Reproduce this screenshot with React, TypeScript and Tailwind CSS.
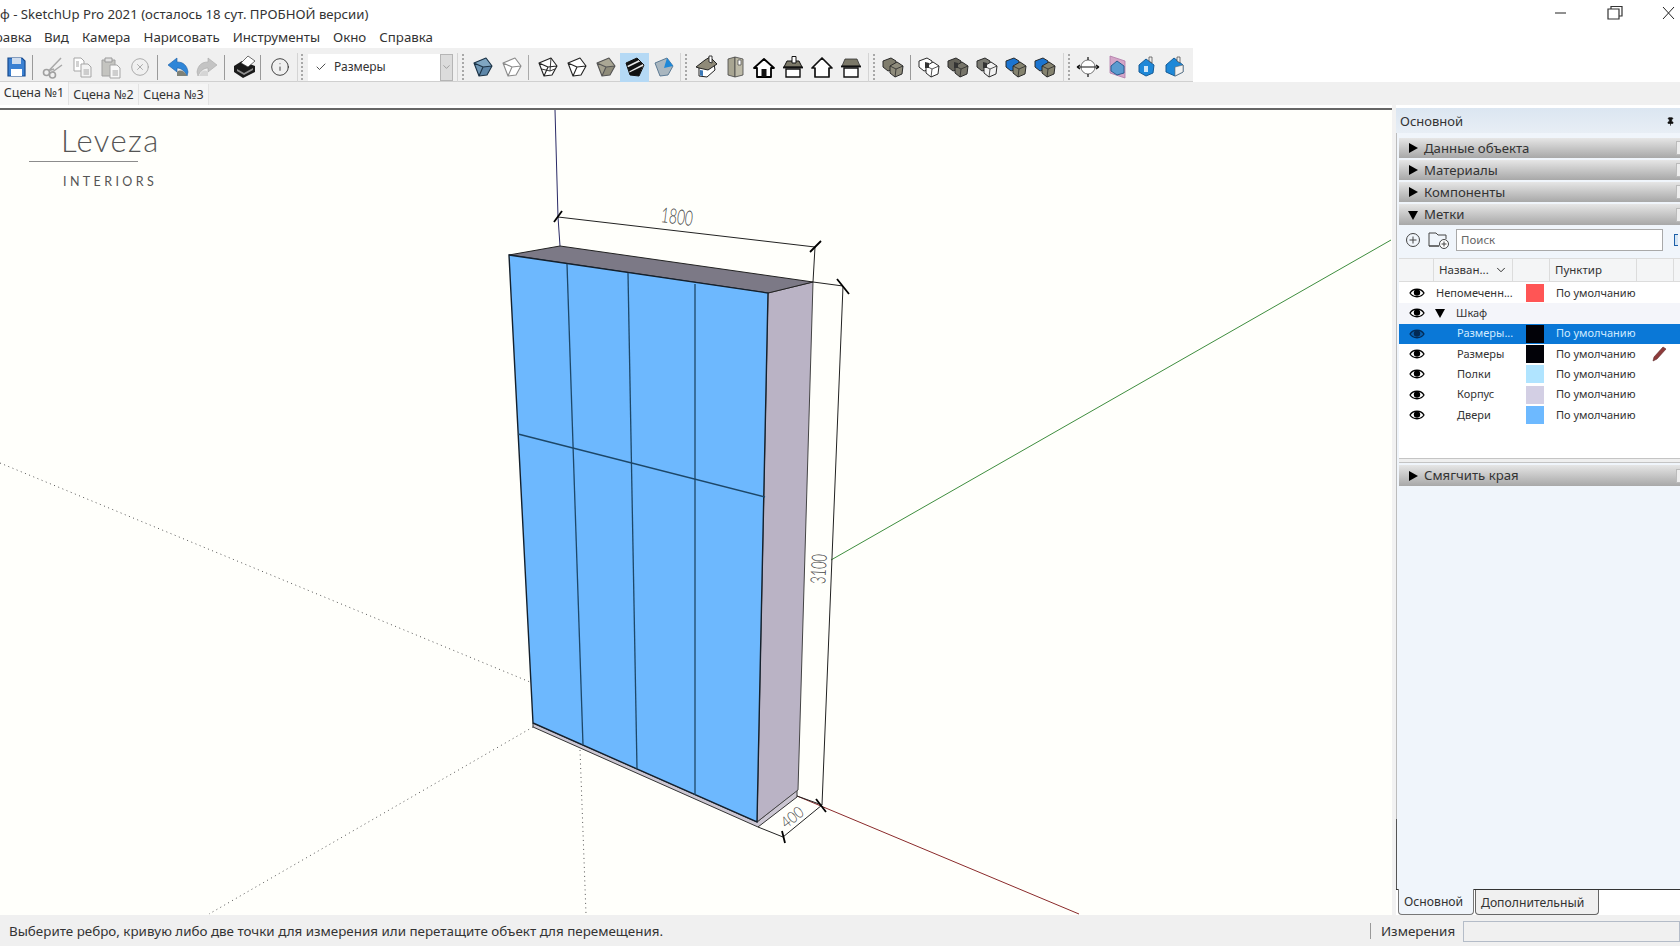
import { Check, ChevronDown, CircleX, Info, Pin } from "lucide-react";
import type { ReactNode } from "react";

const MENU = ["Вид", "Камера", "Нарисовать", "Инструменты", "Окно", "Справка"];

const LAYERS = [
  { name: "Непомеченн...", color: "#ff5555", dash: "По умолчанию", indent: false, arrow: false },
  { name: "Шкаф", color: "", dash: "", indent: true, arrow: true },
  { name: "Размеры...", color: "#020208", dash: "По умолчанию", indent: true, selected: true },
  { name: "Размеры", color: "#020208", dash: "По умолчанию", indent: true, pencil: true },
  { name: "Полки", color: "#b0e4ff", dash: "По умолчанию", indent: true },
  { name: "Корпус", color: "#d3cfe4", dash: "По умолчанию", indent: true },
  { name: "Двери", color: "#6db9ff", dash: "По умолчанию", indent: true },
];

function Ico({ children }: { children: ReactNode }) {
  return (
    <svg viewBox="0 0 24 24" className="h-[24px] w-[24px]">
      {children}
    </svg>
  );
}

function Btn({ children, active, className }: { children: ReactNode; active?: boolean; className?: string }) {
  return (
    <div
      className={`flex h-[29px] w-[29px] shrink-0 items-center justify-center ${
        active ? "bg-[#b5d9f5]" : ""
      } ${className ?? ""}`}
    >
      {children}
    </div>
  );
}

function Sep({ className }: { className: string }) {
  return <div className={`h-[25px] w-px shrink-0 bg-[#9a9a9a] ${className}`} />;
}

function Break({ className }: { className: string }) {
  return <div className={`h-[29px] w-px shrink-0 bg-[#d4d4d4] ${className}`} />;
}

function Grip({ className }: { className: string }) {
  return <div className={`h-[26px] w-[2px] shrink-0 border-l-2 border-dotted border-[#a8a8a8] ${className}`} />;
}

// tilted box used by the face style buttons
function Cube({ top, left, right, stroke = "#222", hidden }: { top: string; left: string; right: string; stroke?: string; hidden?: boolean }) {
  return (
    <Ico>
      <path d="M3 8 L15 3 L21 11 L16 20 L8 21 Z" fill={right} />
      <path d="M3 8 L12 12 L8 21 Z" fill={left} />
      <path d="M3 8 L15 3 L21 11 L12 12 Z" fill={top} />
      <path
        d="M3 8 L15 3 L21 11 L16 20 L8 21 Z M3 8 L12 12 L21 11 M12 12 L8 21"
        fill="none"
        stroke={stroke}
        strokeWidth="1.1"
        strokeLinejoin="round"
      />
      {hidden && <path d="M5.5 14 L14 16 L19 14 M15 3 L14 16" fill="none" stroke={stroke} strokeWidth="0.9" />}
    </Ico>
  );
}

function Striped() {
  return (
    <Ico>
      <path d="M3 8 L14 3 L21 10 L16 21 L7 20 Z" fill="#e8e8e8" stroke="#111" strokeWidth="1" />
      <path d="M3 8 L14 3 L16 5 L4 11 Z M4.5 12.5 L17 6.5 L20 9 L6 16.5 Z M6.5 17.5 L20 11 L16 21 L7 20 Z" fill="#111" />
    </Ico>
  );
}

function Mono() {
  return (
    <Ico>
      <path d="M3 8 L15 3 L21 11 L16 20 L8 21 Z" fill="#a9b6bf" stroke="#50708c" strokeWidth="0.9" />
      <path d="M15 3 L21 11 L12 13 Z" fill="#1e88d8" />
    </Ico>
  );
}

function House({ body = "#fff", roof = "#8f8a78", stroke = "#222", chimney = true }: { body?: string; roof?: string; stroke?: string; chimney?: boolean }) {
  return (
    <Ico>
      <path d="M5 12 L5 21 L13 22 L21 15 L20 9 Z" fill={body} stroke={stroke} strokeWidth="1" />
      <path d="M2 12 L11 5 L16 2 L23 9 L14 15 L5 13 Z" fill={roof} stroke={stroke} strokeWidth="1" />
      {chimney && <path d="M15 1 L18 1 L18 8 L15 7 Z" fill="#fff" stroke={stroke} strokeWidth="0.9" />}
      <path d="M6 15 L9 15.5 L9 21 L6 20.5 Z" fill="#3b79b8" />
    </Ico>
  );
}

function Boxes({ a, b, outline }: { a: string; b: string; outline?: boolean }) {
  return (
    <Ico>
      <path d="M2 6 L10 3 L15 6 L15 14 L7 16 L2 12 Z" fill={a} stroke="#2a2a2a" strokeWidth="1" />
      <path d="M9 11 L16 7 L22 11 L21 19 L14 22 L9 18 Z" fill={b} stroke="#2a2a2a" strokeWidth="1" />
      <path d="M9 11 L15 14 L22 11 M15 14 L14 22" fill="none" stroke="#2a2a2a" strokeWidth="0.8" />
      {outline && <path d="M8 7 L12 8 L12 13 L8 13 Z" fill="#333" />}
    </Ico>
  );
}

function Tri({ open }: { open?: boolean }) {
  return (
    <svg viewBox="0 0 10 10" className="h-[10px] w-[10px]">
      <path d={open ? "M0 1 H10 L5 10 Z" : "M1 0 L10 5 L1 10 Z"} fill="#000" />
    </svg>
  );
}

function Toolbar() {
  return (
    <div className="flex h-[34px] w-[1193px] items-center border-b border-[#d0d0d0] bg-[#f0f0f0] pl-px pt-[5px]">
      <Btn>
        <Ico>
          <path d="M4 3 H18 L21 6 V21 H4 Z" fill="#3a80d2" stroke="#17498c" strokeWidth="1.2" />
          <path d="M8 3 H17 V9 H8 Z" fill="#cfdced" />
          <path d="M7 14 H18 V21 H7 Z" fill="#fff" />
        </Ico>
      </Btn>
      <Sep className="ml-[2px]" />
      <Btn className="ml-[5px]">
        <Ico>
          <circle cx="5.5" cy="17.5" r="3" fill="none" stroke="#a0a0a0" strokeWidth="1.6" />
          <circle cx="11.5" cy="20" r="3" fill="none" stroke="#a0a0a0" strokeWidth="1.6" />
          <path d="M8 15.5 L20 3 M10 18 L21 10 M8 15.5 L13 14" stroke="#a8a8a8" strokeWidth="1.5" fill="none" />
        </Ico>
      </Btn>
      <Btn>
        <Ico>
          <path d="M4 3 H11 L14 6 V16 H4 Z" fill="#fff" stroke="#a5a5a5" />
          <path d="M11 9 H18 L21 12 V22 H11 Z" fill="#f4f4f4" stroke="#a5a5a5" />
          <path d="M13.5 15 H19 M13.5 17 H19 M13.5 19 H19 M6 7 H9 M6 9 H9 M6 11 H9" stroke="#a5a5a5" />
        </Ico>
      </Btn>
      <Btn>
        <Ico>
          <path d="M3 5 H16 V21 H3 Z" fill="#c4c4c0" stroke="#a0a0a0" />
          <path d="M6 3 H13 V7 H6 Z" fill="#e2e2e2" stroke="#999" />
          <path d="M11 10 H18 L21 13 V23 H11 Z" fill="#f8f8f8" stroke="#a5a5a5" />
          <path d="M13.5 16 H19 M13.5 18 H19 M13.5 20 H19" stroke="#a5a5a5" />
        </Ico>
      </Btn>
      <Btn>
        <CircleX size={20} strokeWidth={1} color="#9e9e9e" />
      </Btn>
      <Sep className="ml-[3px]" />
      <Btn className="ml-[5px]">
        <Ico>
          <path d="M2 10 L11 3 L11 7 C17 7 21 10 22 17 L21 21 C19 16 15 13 11 13 L11 17 Z" fill="#2f86d8" stroke="#1b5da3" strokeWidth="0.6" />
          <path d="M11 17 C14 14 19 16 21 21 L11 21 Z" fill="#7f8278" />
        </Ico>
      </Btn>
      <Btn>
        <Ico>
          <path d="M22 10 L13 3 L13 7 C7 7 3 10 2 17 L3 21 C5 16 9 13 13 13 L13 17 Z" fill="#c4c4c4" stroke="#a8a8a8" strokeWidth="0.6" />
          <path d="M13 17 C10 14 6 16 4 21 L13 21 Z" fill="#d5d5d5" />
        </Ico>
      </Btn>
      <Sep className="ml-[3px]" />
      <Btn className="ml-[5px]">
        <Ico>
          <path d="M1 11 L9 6 L22 11 L22 17 L10 23 L1 17 Z" fill="#1a1a1a" />
          <path d="M8 8 L15 1 L22 6 L15 12 Z" fill="#fff" stroke="#333" strokeWidth="0.7" />
          <path d="M4 14 L11 18 L20 13 L20 15 L11 20 L4 16 Z" fill="#8f8f8f" />
        </Ico>
      </Btn>
      <Sep className="ml-px" />
      <Btn className="ml-[4px]">
        <Info size={20} strokeWidth={1} color="#222" />
      </Btn>
      <Break className="ml-[3px]" />
      <Grip className="ml-[3px]" />
      <div className="ml-[5px] flex h-[27px] w-[145px] shrink-0 items-center bg-white pl-[7px] text-[12px] text-[#333]">
        <Check size={12} strokeWidth={1.6} color="#222" />
        <span className="ml-[7px] flex-1">Размеры</span>
        <div className="flex h-full w-[13px] items-center justify-center border border-[#b5b5b5] bg-[#dcdcdc]">
          <ChevronDown size={12} strokeWidth={1} color="#555" />
        </div>
      </div>
      <Break className="ml-[4px]" />
      <Grip className="ml-[4px]" />
      <Btn className="ml-[4px]">
        <Cube top="#7fa6c2" left="#6d95b4" right="#5d86a8" stroke="#1c3346" />
      </Btn>
      <Btn>
        <Cube top="#fff" left="#fff" right="#fff" stroke="#8a8a8a" />
      </Btn>
      <Sep className="ml-[2px] w-[2px] bg-[#aaaaaa]" />
      <Btn className="ml-[4px]">
        <Cube top="#fff" left="#fff" right="#fff" stroke="#222" hidden />
      </Btn>
      <Btn>
        <Cube top="#fff" left="#fff" right="#fff" stroke="#222" />
      </Btn>
      <Btn>
        <Cube top="#aaa795" left="#a3a08e" right="#8f8c7a" stroke="#555" />
      </Btn>
      <Btn active>
        <Striped />
      </Btn>
      <Btn>
        <Mono />
      </Btn>
      <Break className="ml-[2px]" />
      <Grip className="ml-[4px]" />
      <Btn className="ml-[4px]">
        <House />
      </Btn>
      <Btn>
        <Ico>
          <path d="M5 4 L12 2 L12 22 L5 20 Z" fill="#a8a592" stroke="#444" strokeWidth="0.8" />
          <path d="M12 2 L20 4 L20 20 L12 22 Z" fill="#bdbaa8" stroke="#444" strokeWidth="0.8" />
          <path d="M15 5 H18 V10 H15 Z" fill="#fff" stroke="#444" strokeWidth="0.7" />
        </Ico>
      </Btn>
      <Btn>
        <Ico>
          <path d="M2 13 L12 4 L22 13 L19 13 L19 22 L5 22 L5 13 Z" fill="#fff" stroke="#000" strokeWidth="1.8" strokeLinejoin="round" />
          <path d="M9.5 14 H14.5 V22 H9.5 Z" fill="#111" />
        </Ico>
      </Btn>
      <Btn>
        <Ico>
          <path d="M3 12 H21 L18 6 H6 Z" fill="#7b7868" stroke="#111" />
          <path d="M5 14 H19 V22 H5 Z" fill="#fff" stroke="#111" strokeWidth="1.4" />
          <path d="M2 12.5 H22" stroke="#111" strokeWidth="1.8" />
          <path d="M11 1.5 H15 V8 H11 Z" fill="#fff" stroke="#111" />
        </Ico>
      </Btn>
      <Btn>
        <Ico>
          <path d="M2 13 L12 3 L22 13 L19 13 L19 22 L5 22 L5 13 Z" fill="#fff" stroke="#111" strokeWidth="1.7" strokeLinejoin="round" />
        </Ico>
      </Btn>
      <Btn>
        <Ico>
          <path d="M3 11 L6 4 H18 L21 11 Z" fill="#7b7868" stroke="#333" strokeWidth="0.8" />
          <path d="M2 11.5 H22" stroke="#111" strokeWidth="1.8" />
          <path d="M5 13 H19 V22 H5 Z" fill="#fff" stroke="#111" strokeWidth="1.4" />
        </Ico>
      </Btn>
      <Break className="ml-[3px]" />
      <Grip className="ml-[4px]" />
      <Btn className="ml-[3px]">
        <Boxes a="#7f7c6c" b="#8f8c7c" />
      </Btn>
      <Sep className="ml-[3px]" />
      <Btn className="ml-[3px]">
        <Boxes a="#ffffff" b="#ffffff" outline />
      </Btn>
      <Btn>
        <Boxes a="#65635a" b="#77756a" outline />
      </Btn>
      <Btn>
        <Boxes a="#7a7a72" b="#f2f2f2" outline />
      </Btn>
      <Btn>
        <Boxes a="#1b74d0" b="#85836f" />
      </Btn>
      <Btn>
        <Boxes a="#1b74d0" b="#85836f" />
      </Btn>
      <Break className="ml-[4px]" />
      <Grip className="ml-[4px]" />
      <Btn className="ml-[3px]">
        <Ico>
          <circle cx="12" cy="12" r="7" fill="#fff" stroke="#555" strokeWidth="0.8" />
          <path d="M1 12 H23 M12 2 V5 M12 19 V22 M1 12 L4 10 M1 12 L4 14 M23 12 L20 10 M23 12 L20 14" stroke="#111" strokeWidth="1.2" fill="none" />
        </Ico>
      </Btn>
      <Btn>
        <Ico>
          <path d="M5 1 L20 6 L20 23 L5 18 Z" fill="#d4a6c8" stroke="#b07aa8" strokeWidth="0.8" />
          <path d="M12 6 L19 11 L19 18 L12 20 L6 16 L6 11 Z" fill="#5a9bd0" stroke="#2a5d8f" />
        </Ico>
      </Btn>
      <Btn>
        <Ico>
          <path d="M12 4 L20 10 L19 18 L12 21 L5 17 L5 10 Z" fill="#1e88d8" stroke="#155b96" />
          <path d="M10 11 H14 V17 H10 Z" fill="#cfe6f7" />
          <path d="M15 2 H18 V8 L15 6 Z" fill="#eee" stroke="#444" strokeWidth="0.7" />
        </Ico>
      </Btn>
      <Btn>
        <Ico>
          <path d="M3 10 L11 3 L20 10 L20 17 L12 21 L3 17 Z" fill="#1e88d8" stroke="#155b96" />
          <path d="M12 12 L20 10 L20 17 L12 21 Z" fill="#f2f2f2" stroke="#666" strokeWidth="0.6" />
          <path d="M14 2 H17 V8 L14 6 Z" fill="#eee" stroke="#444" strokeWidth="0.7" />
        </Ico>
      </Btn>
    </div>
  );
}

function Scene() {
  return (
    <svg viewBox="0 108 1392 807" className="block h-[807px] w-[1392px]">
      {/* axes */}
      <path d="M555 110 L558 217 L560 246" stroke="#2a2a66" strokeWidth="1" fill="none" />
      <path d="M831 560 L1391 240" stroke="#3e8d3e" strokeWidth="1" />
      <path d="M797 796 L1079 914" stroke="#8a2a2a" strokeWidth="1" />
      <g stroke="#555" strokeWidth="1" strokeDasharray="1 3.5">
        <path d="M0 463 L530 682" />
        <path d="M533 727 L209 914" />
        <path d="M580 750 L586 914" />
      </g>
      {/* cabinet */}
      <path d="M533 723 L533 727 L758 827 L797 797 L797 790 L757 822 Z" fill="#cbc6d2" stroke="#333" strokeWidth="1" />
      <path d="M768 293 L813 282 L798 790 L757 822 Z" fill="#bab3c5" stroke="#444" strokeWidth="1" />
      <path d="M509 255 L560 246 L813 282 L768 293 Z" fill="#7c7986" stroke="#222" strokeWidth="1" />
      <path d="M509 255 L768 293 L757 822 L533 723 Z" fill="#6db8fe" stroke="#14202c" strokeWidth="1.4" />
      <g stroke="#1d4768" strokeWidth="1.3">
        <path d="M567 264 L583 745" />
        <path d="M628 273 L637 769" />
        <path d="M695 284 L695 795" />
        <path d="M518 434 L765 497" />
      </g>
      {/* dimensions */}
      <g stroke="#222" strokeWidth="1" fill="none">
        <path d="M558 217 L815 247" />
        <path d="M815 247 L813 282" />
        <path d="M813 282 L843 286" />
        <path d="M843 286 L822 805" />
        <path d="M758 827 L783 837 L822 805 L797 796" />
      </g>
      <g stroke="#000" strokeWidth="1.8">
        <path d="M554 222 L562 211" />
        <path d="M810 252 L821 241" />
        <path d="M837 279 L849 294" />
        <path d="M816 799 L826 812" />
        <path d="M782 831 L785 843" />
      </g>
      <g fill="#444" fontFamily="Lato, sans-serif" fontWeight="300" fontSize="21">
        <text x="661" y="224" textLength={32} lengthAdjust="spacingAndGlyphs" transform="rotate(7 677 217)">1800</text>
        <text x="804" y="576" textLength={30} lengthAdjust="spacingAndGlyphs" transform="rotate(-87 819 569)">3100</text>
        <text x="780" y="823" fontSize="16" textLength={24} lengthAdjust="spacingAndGlyphs" transform="rotate(-38 792 817)">400</text>
      </g>
    </svg>
  );
}

function Logo() {
  return (
    <div className="absolute left-[29px] top-[15px] w-[130px] font-['Lato',sans-serif] text-[#555]">
      <div className="pl-[32px] text-[31px] leading-[31px] font-light tracking-[1.4px]">Leveza</div>
      <div className="mt-[5px] h-px w-[109px] bg-[#8c8c8c]" />
      <div className="mt-[13px] pl-[34px] text-[12.5px] leading-[14px] tracking-[3.4px] whitespace-nowrap">INTERIORS</div>
    </div>
  );
}

function Section({ title, open, className }: { title: string; open?: boolean; className?: string }) {
  return (
    <div
      className={`flex h-[20px] items-center bg-gradient-to-b from-[#e6e6e6] to-[#a8a8a8] pl-[9px] text-[13.2px] text-[#333] ${className ?? ""}`}
    >
      <span className="flex w-[16px] items-center">
        <Tri open={open} />
      </span>
      <span className="flex-1 pt-px">{title}</span>
      <span className="h-[14px] w-[4px] border-y border-l border-[#bbb] bg-[#eee]" />
    </div>
  );
}

function Eye({ dark }: { dark?: boolean }) {
  return (
    <svg viewBox="0 0 16 12" className="h-[12px] w-[16px]">
      <path d="M1 6 C4 1 12 1 15 6 C12 11 4 11 1 6 Z" fill={dark ? "#0a62b0" : "#fff"} stroke={dark ? "#032a55" : "#000"} strokeWidth="1.3" />
      <circle cx="8" cy="5.6" r="3.2" fill={dark ? "#032a55" : "#000"} />
    </svg>
  );
}

function Panel() {
  return (
    <div className="flex h-full w-[288px] shrink-0">
      <div className="w-[4px] bg-[#f2f2f2]" />
      <div className="flex flex-1 flex-col bg-[#f0f5fb] text-[#333]">
        <div className="h-[3px] bg-white" />
        <div className="flex h-[25px] items-center justify-between bg-gradient-to-b from-[#dbe6f1] to-[#e8eef5] pl-[4px] pr-[5px] pt-[2px] text-[13px]">
          <span>Основной</span>
          <Pin size={9} strokeWidth={2} color="#111" fill="#111" />
        </div>
        <div className="relative flex flex-1 flex-col border-l border-[#bcbcbc] pl-[2px] pt-[5px]">
          <div className="absolute -left-px bottom-0 h-[70px] w-px bg-[#555]" />
          <div className="flex flex-col gap-[2px]">
            <Section title="Данные объекта" />
            <Section title="Материалы" />
            <Section title="Компоненты" />
            <Section title="Метки" open className="h-[21px]" />
          </div>
          <div className="flex h-[33px] items-center bg-[#f0f5fb] pb-[3px] pl-[6px]">
            <svg viewBox="0 0 16 16" className="h-[16px] w-[16px]">
              <circle cx="8" cy="8" r="6.5" fill="none" stroke="#444" strokeWidth="1" />
              <path d="M8 4.5 V11.5 M4.5 8 H11.5" stroke="#444" strokeWidth="1" />
            </svg>
            <svg viewBox="0 0 22 20" className="ml-[7px] h-[20px] w-[22px]">
              <path d="M1 3 H8 L10 5 H18 V9 M11 16 H1 Z" fill="none" stroke="#444" strokeWidth="1" />
              <path d="M1 3 V16" stroke="#444" strokeWidth="1" />
              <circle cx="16" cy="14" r="4.5" fill="#fff" stroke="#444" strokeWidth="1" />
              <path d="M16 11.5 V16.5 M13.5 14 H18.5" stroke="#444" strokeWidth="1" />
            </svg>
            <div className="ml-[6px] flex h-[22px] w-[207px] items-center border border-[#a9a9a9] bg-white pb-px pl-[4px] text-[11.5px] text-[#666]">
              Поиск
            </div>
            <div className="ml-[11px] h-[12px] w-[4px] border-y border-l border-[#1c5fa8] bg-[#d6e6f5]" />
          </div>
          <div className="flex h-[24px] items-center border-y border-[#dcdcdc] bg-[#f4f5f6] text-[11.5px]">
            <div className="h-full w-[35px] border-r border-[#dcdcdc]" />
            <div className="flex h-full w-[79px] items-center border-r border-[#dcdcdc] pl-[5px]">
              Назван...
              <ChevronDown size={14} strokeWidth={1.6} color="#222" className="ml-[5px]" />
            </div>
            <div className="h-full w-[37px] border-r border-[#dcdcdc]" />
            <div className="flex h-full w-[87px] items-center border-r border-[#dcdcdc] pl-[5px]">Пунктир</div>
            <div className="h-full w-[37px] border-r border-[#dcdcdc]" />
          </div>
          <div className="h-[176px] bg-white pt-px">
            {LAYERS.map((l) => (
              <div
                key={l.name + l.color}
                className={`flex h-[20.3px] items-center text-[11px] ${
                  l.selected ? "bg-[#0a78d7] text-[#cfeaff]" : l.arrow ? "bg-[#f4f5fa]" : ""
                }`}
              >
                <div className="flex w-[35px] justify-center pl-[1px]">
                  <Eye dark={l.selected} />
                </div>
                {l.arrow && (
                  <span className="ml-[1px] flex w-[21px] items-center">
                    <Tri open />
                  </span>
                )}
                <div className={`truncate ${l.arrow ? "w-[70px]" : l.indent ? "w-[92px] pl-[23px]" : "w-[92px] pl-[2px]"}`}>
                  {l.name}
                </div>
                <div className="h-[18px] w-[18px] shrink-0" style={{ background: l.color || "transparent" }} />
                <div className="ml-[12px] w-[92px] shrink-0">{l.dash}</div>
                {l.pencil && (
                  <svg viewBox="0 0 16 16" className="ml-[3px] h-[16px] w-[16px]">
                    <path d="M2 15 L3 11 L12 1 L15 3 L6 13 Z" fill="#8e3b3b" stroke="#5e2a2a" strokeWidth="0.6" />
                  </svg>
                )}
              </div>
            ))}
          </div>
          <div className="mb-[2px] h-[5px] border-y border-[#c4c4c4] bg-[#efefef]" />
          <Section title="Смягчить края" className="h-[21px]" />
          <div className="flex-1" />
        </div>
        <div className="flex h-[26px] border-t border-[#333] bg-white text-[12.2px]">
          <div className="-mt-px ml-[2px] flex h-[26px] w-[76px] items-center rounded-b-[4px] border-x border-b border-[#777] bg-[#f0f5fb] pl-[5px] pt-[2px]">
            Основной
          </div>
          <div className="ml-px flex h-[25px] w-[124px] items-center rounded-b-[4px] border-x border-b border-[#666] bg-[#f0f0f0] pl-[5px] pt-[2px]">
            Дополнительный
          </div>
        </div>
      </div>
    </div>
  );
}

export default function App() {
  return (
    <div className="flex h-[946px] w-[1680px] flex-col overflow-hidden bg-white font-['Noto_Sans',sans-serif] text-[#333]">
      <div className="flex h-[26px] items-center text-[13.2px] text-[#333]">
        <span className="flex-1 whitespace-nowrap pt-[3px]">ф - SketchUp Pro 2021 (осталось 18 сут. ПРОБНОЙ версии)</span>
        <svg viewBox="0 0 160 26" className="h-[26px] w-[160px]">
          <path d="M35 13 H46" stroke="#222" strokeWidth="1" />
          <path d="M88 9 H99 V19 H88 Z M91 9 V6.5 H102 V16 H99" fill="none" stroke="#333" strokeWidth="1.2" />
          <path d="M143 7 L154 19 M154 7 L143 19" stroke="#222" strokeWidth="1" />
        </svg>
      </div>
      <div className="flex h-[22px] items-center gap-[13px] pt-[2px] text-[13.3px] text-[#333]">
        <span className="-ml-[15px] -mr-px">Правка</span>
        {MENU.map((m) => (
          <span key={m}>{m}</span>
        ))}
      </div>
      <Toolbar />
      <div className="flex h-[23px] items-end bg-[#f0f0f0] text-[12.5px]">
        <div className="flex h-[23px] w-[69px] items-center justify-center border-r border-[#e3e3e3] bg-[#f8f8f8] pb-px">Сцена №1</div>
        <div className="flex h-[21px] w-[70px] items-center justify-center border-r border-[#e3e3e3] bg-[#f5f5f5] pt-[2px]">Сцена №2</div>
        <div className="flex h-[21px] w-[70px] items-center justify-center border-r border-[#e3e3e3] bg-[#f5f5f5] pt-[2px]">Сцена №3</div>
      </div>
      <div className="flex h-[810px]">
        <div className="flex w-[1392px] shrink-0 flex-col">
          <div className="h-[3px] bg-white" />
          <div className="relative flex-1 border-t-2 border-[#666] bg-[#fffffb]">
            <div className="-mt-[2px]">
              <Scene />
            </div>
            <Logo />
          </div>
        </div>
        <Panel />
      </div>
      <div className="flex h-[31px] items-center bg-[#f0f0f0] pl-[9px] pt-[1px] text-[13.4px] text-[#333]">
        <span className="w-[1361px]">Выберите ребро, кривую либо две точки для измерения или перетащите объект для перемещения.</span>
        <div className="h-[16px] w-px bg-[#999]" />
        <span className="ml-[10px] w-[82px]">Измерения</span>
        <div className="h-[21px] flex-1 border border-[#b4bcc8] bg-[#f0f0f0]" />
      </div>
    </div>
  );
}
